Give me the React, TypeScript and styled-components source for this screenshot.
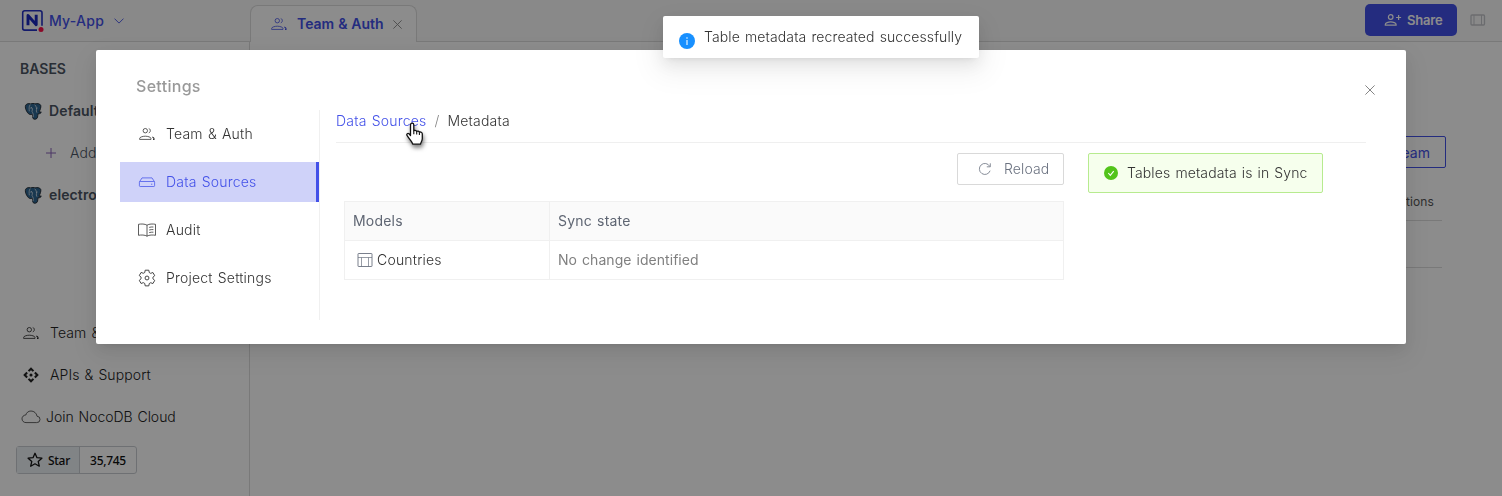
import React from "react";
import styled, { createGlobalStyle, css } from "styled-components";

const PRIMARY = "#4351e8";

const GlobalStyle = createGlobalStyle`
  *, *::before, *::after { box-sizing: border-box; }
  html, body { margin: 0; height: 100%; overflow: hidden; }
  body {
    font-family: Inter, "Liberation Sans", sans-serif;
    font-size: 14px;
    font-weight: 300;
    line-height: 22px;
    letter-spacing: 0.12px;
    word-spacing: 1px;
    color: #333;
    background: #fff;
  }
  svg { display: block; flex: none; }
`;

/* ---------- icons ---------- */

const TeamIcon = ({ w = 16 }: { w?: number }) => (
  <svg width={w} height={w} viewBox="0 0 16 16" fill="none" stroke="currentColor" strokeWidth="0.8">
    <circle cx="6.300" cy="4.700" r="2.200" />
    <path d="M.6 13.400v-.8c0-1.500 3.200-2.400 5.700-2.400s5.700.9 5.700 2.400v.8z" />
    <path d="M9.800 2.500c1.100.4 1.500 1.200 1.500 2.200s-.4 1.800-1.500 2.200" />
    <path d="M13.300 10.900c1 .4 1.700.9 1.700 1.500v1h-1" strokeWidth="1.100" />
  </svg>
);

const AddUserIcon = () => (
  <svg width="18" height="18" viewBox="0 0 18 18" fill="none" stroke="currentColor" strokeWidth="1.2">
    <circle cx="6.700" cy="6" r="2.300" />
    <path d="M1.300 14.200v-.800c0-1.500 3-2.500 5.400-2.500s5.400 1 5.400 2.500v.8zM14.600 4v5M12.100 6.500h5" />
  </svg>
);

const DriveIcon = () => (
  <svg width="18" height="18" viewBox="0 0 18 18" fill="none" stroke="currentColor" strokeWidth="0.75">
    <path d="M1.500 8.800 4 4.900h10l2.500 3.900" />
    <rect x="1.400" y="8.500" width="15.200" height="5" rx="0.8" />
    <path d="M13 11.200h1.300" />
  </svg>
);

const BookIcon = () => (
  <svg width="20" height="18" viewBox="0 0 20 18" fill="none" stroke="currentColor" strokeWidth="0.8">
    <path d="M10 4.200C8 2.800 4 2.800 1.500 3.300v11c2.500-.5 6.500-.5 8.500.9 2-1.400 6-1.400 8.500-.9v-11C16 2.800 12 2.800 10 4.200zM10 4.200v11" />
    <path d="M12.200 6.400c1.400-.4 2.800-.5 4.200-.4M12.200 9c1.400-.4 2.800-.5 4.200-.4M12.200 11.600c1.400-.4 2.800-.5 4.200-.4" />
  </svg>
);

const GearIcon = () => (
  <svg width="18" height="18" viewBox="0 0 24 24" fill="none" stroke="currentColor" strokeWidth="1.200" strokeLinejoin="round">
    <path d="M9.600 1.600h4.800l.6 3.100 1.900 1.100 3-1.100 2.400 4.200-2.400 2v2.200l2.400 2.100-2.400 4.200-3-1.100-1.900 1.100-.6 3.100H9.600L9 19.300l-1.900-1.100-3 1.100-2.400-4.200 2.400-2.100v-2.200l-2.400-2 2.400-4.200 3 1.100L9 4.700z" />
    <circle cx="12" cy="12" r="2.600" />
  </svg>
);

const TableIcon = () => (
  <svg width="16" height="16" viewBox="0 0 16 16" fill="none" stroke="#6b7280">
    <rect x="1" y="1.500" width="14" height="13" rx="0.5" strokeWidth="0.9" />
    <path d="M1 5.500h14M4.500 5.500v9M11.500 5.500v9" strokeWidth="0.7" />
  </svg>
);

const ReloadIcon = () => (
  <svg width="14" height="14" viewBox="0 0 14 14" fill="none" stroke="currentColor" strokeWidth="0.8">
    <path d="M11.700 4.300A5.500 5.500 0 1 0 12.100 8.700" />
    <path d="M12.300 1.300v3.500H8.800" />
  </svg>
);

const CrossIcon = ({ s = 10, w = 1 }: { s?: number; w?: number }) => (
  <svg width={s} height={s} viewBox="0 0 10 10" stroke="currentColor" strokeWidth={w}>
    <path d="M.4.400l9.200 9.200M9.600.4.400 9.600" />
  </svg>
);

const ChevronIcon = () => (
  <svg width="10" height="6" viewBox="0 0 10 6" fill="none" stroke="currentColor" strokeWidth="0.9">
    <path d="M.5.600 5 5.100 9.500.600" />
  </svg>
);

const ApiIcon = () => (
  <svg width="16" height="16" viewBox="0 0 24 24" fill="currentColor">
    <circle cx="12" cy="12" r="2.300" />
    <path d="m12 .3 4.800 4.800-2.200 2.200L12 4.700 9.400 7.300 7.200 5.100zM12 23.700l-4.800-4.800 2.200-2.200 2.600 2.600 2.600-2.600 2.200 2.200zM.3 12l4.800-4.800 2.200 2.200L4.700 12l2.600 2.600-2.200 2.200zM23.700 12l-4.800 4.800-2.200-2.200 2.600-2.600-2.600-2.600 2.200-2.200z" />
  </svg>
);

const CloudIcon = () => (
  <svg width="20" height="14" viewBox="0 0 20 14" fill="none" stroke="currentColor" strokeWidth="0.7">
    <path d="M5 12.600h10.600a3.200 3.200 0 0 0 .4-6.400C15.600 3.100 13 1 10 1 7.400 1 5.400 2.600 4.800 5 2.600 5.100 1 6.700 1 8.800s1.700 3.800 4 3.800z" />
  </svg>
);

const StarIcon = () => (
  <svg width="16" height="16" viewBox="0 0 16 16" fill="none" stroke="#111" strokeWidth="1.300" strokeLinejoin="round">
    <path d="m8 1.300 2 4.400 4.900.5-3.700 3.200 1.100 4.800L8 11.800l-4.300 2.400 1.100-4.800L1.100 6.200 6 5.700z" />
  </svg>
);

const PostgresIcon = () => (
  <svg width="18" height="17" viewBox="0 0 18 17">
    <path
      d="M2.600 1.200C4 .3 5.600.5 6.600.9 8 .3 10 .4 11 .9c2-.7 5-.3 5.700 1.400.6 1.800-.6 4.800-1.700 6.600.8.200 1.800.2 2.200 0 .2 1.200-1.600 2.100-3.200 1.900-.4 1.900.2 5-2.600 5.400-2.200.3-2.900-1-2.800-2.800l-.2-2.200c-1 .6-2.300.3-3 .1C3.300 10.600-.7 3.300 2.600 1.200z"
      fill="#2f6792"
      stroke="#20262c"
      strokeWidth="0.9"
    />
    <path
      d="M6.300 1.500C4.600 3.600 5.200 6 5.300 8.300M10.700 1.700c1.800 1.600 2.200 4.200 1.600 6.300l.6 1.700M6.300 5.200c1-.6 2-.4 2.200.5L8 8.500c.2 1 1.200 1.400 1.200 2.600v3M12.100 5.300l1.500-.3"
      fill="none"
      stroke="#e8eef3"
      strokeWidth="0.7"
    />
    <circle cx="7.300" cy="4.700" r=".5" fill="#fff" />
  </svg>
);

const LogoIcon = () => (
  <svg width="24" height="24" viewBox="0 0 24 24" fill="none">
    <path d="M16 20.300H3.600A1.900 1.900 0 0 1 1.700 18.400V2.900A1.900 1.900 0 0 1 3.600 1h15.500A1.900 1.900 0 0 1 21 2.900V16" transform="translate(0 .8)" stroke="#2330c4" strokeWidth="1.600" />
    <path d="M7 16.300V6.500l8.200 9.200V5.800" stroke="#1b28bd" strokeWidth="2.900" strokeLinejoin="round" />
    <circle cx="20" cy="20.600" r="2.500" fill="#fc1148" />
  </svg>
);

const PanelIcon = () => (
  <svg width="16" height="12" viewBox="0 0 16 12" fill="none" stroke="#c3c5ca">
    <rect x="1" y="1" width="13.500" height="10" rx="1" strokeWidth="1.300" />
    <path d="M4 1v10M11.500 1v10" />
  </svg>
);

const InfoIcon = () => (
  <svg width="16" height="16" viewBox="0 0 16 16">
    <circle cx="8" cy="8" r="8" fill="#1890ff" />
    <path d="M8 7v5M8 4.300v1.400" stroke="#d5eaff" strokeWidth="1.300" />
  </svg>
);

const CheckIcon = () => (
  <svg width="14" height="14" viewBox="0 0 14 14">
    <circle cx="7" cy="7" r="7" fill="#52c41a" />
    <path d="m4.300 7 2 2.300 3.400-4.200" fill="none" stroke="#fff" strokeWidth="1.100" />
  </svg>
);

const HandIcon = () => (
  <svg width="18" height="25" viewBox="0 0 18 25">
    <path
      d="M6.100 1.200c1 0 1.700.7 1.700 1.700v5.900c.3-.8 2.500-.7 2.900.7.600-.8 2.400-.5 2.700.8 1.200-.7 2.900 0 2.900 1.600v4.600c0 2.800-1.400 3.600-1.800 5.700H6.800C6.400 19.700 2.600 16.300 1 13.400c-.7-1.400.8-2.600 2-1.600l1.500 1.700V2.900c0-1 .6-1.700 1.600-1.700z"
      fill="#fff"
      stroke="#111"
      strokeWidth="1.300"
      strokeLinejoin="round"
    />
    <path d="M7.800 8.800v3.400M10.700 9.700v2.900M13.400 10.800v2.300" stroke="#111" strokeWidth="1.100" />
  </svg>
);

/* ---------- workspace behind the dialog ---------- */

const Workspace = styled.div`
  display: flex;
  flex-direction: column;
  height: 100vh;
`;

const TopBar = styled.header`
  display: flex;
  height: 42px;
  background: #fafafa;
  flex: none;
`;

const ProjectSwitch = styled.div`
  display: flex;
  align-items: center;
  width: 250px;
  padding-left: 21px;
  border-bottom: 1px solid #dcdcdc;
  color: ${PRIMARY};
`;

const ProjectName = styled.span`
  margin: 1px 10px 0 4px;
  font-weight: 500;
  letter-spacing: 0.25px;
`;

const Tab = styled.div`
  display: flex;
  align-items: center;
  width: 167px;
  margin-top: 5px;
  padding: 0 13px 0 20px;
  border: 1px solid #dcdcdc;
  border-bottom: 0;
  border-radius: 8px 8px 0 0;
  background: #fff;
  color: ${PRIMARY};
`;

const TabTitle = styled.span`
  margin: 0 9px 0 10px;
  white-space: nowrap;
  font-weight: 600;
  letter-spacing: 0;
  word-spacing: 0.4px;
`;

const Muted = styled.span`
  color: #888;
`;

const TopActions = styled.div`
  display: flex;
  flex: 1;
  align-items: center;
  justify-content: flex-end;
  gap: 13px;
  padding: 0 16px 2px 0;
  border-bottom: 1px solid #dcdcdc;
`;

const ShareButton = styled.button`
  display: flex;
  align-items: center;
  gap: 5px;
  width: 92px;
  height: 32px;
  padding: 0 0 0 19px;
  border: 0;
  border-radius: 5px;
  background: ${PRIMARY};
  color: #fff;
  font: 600 13px Inter, sans-serif;
  letter-spacing: -0.2px;
`;

const Body = styled.div`
  display: flex;
  flex: 1;
  min-height: 0;
`;

const Sidebar = styled.aside`
  display: flex;
  flex-direction: column;
  width: 250px;
  border-right: 1px solid #dcdcdc;
`;

const SidebarTitle = styled.div`
  padding: 16px 0 0 20px;
  font-weight: 600;
  letter-spacing: 0;
  color: #4b5563;
`;

const BaseRow = styled.div<{ $nested?: boolean }>`
  display: flex;
  align-items: center;
  gap: ${(p) => (p.$nested ? 14 : 7)}px;
  height: 42px;
  padding-left: ${(p) => (p.$nested ? 46 : 24)}px;
  font-weight: ${(p) => (p.$nested ? 300 : 600)};
  color: #4b5563;
`;

const BaseList = styled.div`
  flex: 1;
  padding-top: 10px;
`;

const FooterLink = styled.div<{ $gap?: number; $inset?: number }>`
  display: flex;
  align-items: center;
  gap: ${(p) => p.$gap ?? 11}px;
  height: 42px;
  padding-left: ${(p) => p.$inset ?? 23}px;
  letter-spacing: ${(p) => (p.$gap ? -0.03 : 0.1)}px;
  color: #222;
`;

const StarBadge = styled.div`
  display: flex;
  width: 121px;
  height: 28px;
  margin: 8px 0 22px 16px;
  border: 1px solid #c9cdd2;
  border-radius: 3px;
  font: 500 12px/27px "Noto Sans", sans-serif;
  letter-spacing: -0.3px;
  color: #111;
`;

const StarLabel = styled.div`
  display: flex;
  align-items: center;
  gap: 5px;
  width: 63px;
  padding-left: 10px;
  border-right: 1px solid #c9cdd2;
  background: #ebf0f4;
`;

const StarCount = styled.div`
  flex: 1;
  text-align: center;
`;

const Main = styled.main`
  display: flex;
  flex: 1;
  flex-direction: column;
  align-items: flex-end;
  padding: 94px 56px 0 0;
`;

const InviteButton = styled.button`
  height: 32px;
  padding: 0 15px;
  border: 1px solid ${PRIMARY};
  border-radius: 2px;
  background: #fff;
  color: ${PRIMARY};
  font: 400 14px Inter, sans-serif;
`;

const UserRow = styled.div<{ $height: number }>`
  width: 1100px;
  height: ${(p) => p.$height}px;
  margin-right: 4px;
  padding: 23px 8px 0 0;
  border-bottom: 1px solid #dcdcdc;
  text-align: right;
  font-size: 12px;
  font-weight: 400;
  color: #555;
`;

/* ---------- dialog ---------- */

const Mask = styled.div`
  position: fixed;
  inset: 0;
  background: rgba(0, 0, 0, 0.45);
`;

const Dialog = styled.section`
  position: fixed;
  top: 50px;
  left: 96px;
  display: flex;
  flex-direction: column;
  width: 1310px;
  height: 294px;
  padding: 24px 40px 24px 24px;
  border-radius: 2px;
  background: #fff;
  box-shadow: 0 3px 6px -4px rgba(0, 0, 0, 0.12), 0 6px 16px rgba(0, 0, 0, 0.08),
    0 9px 28px 8px rgba(0, 0, 0, 0.05);
`;

const DialogHead = styled.div`
  display: flex;
  justify-content: space-between;
  height: 36px;
  padding: 1px 0 0 16px;
  font-size: 16px;
  font-weight: 500;
  letter-spacing: 0.3px;
  color: #999;
`;

const CloseButton = styled.span`
  margin: 10px -9px 0 0;
  color: #777;
`;

const DialogBody = styled.div`
  display: flex;
  flex: 1;
  gap: 16px;
`;

const Menu = styled.nav`
  display: flex;
  flex-direction: column;
  gap: 8px;
  width: 200px;
  padding-top: 4px;
  border-right: 1px solid #f0f0f0;
`;

const MenuItem = styled.div<{ $active?: boolean }>`
  display: flex;
  align-items: center;
  height: 40px;
  padding-left: 17px;
  letter-spacing: 0.2px;
  color: #333;
  ${(p) =>
    p.$active &&
    css`
      background: #cfd2f9;
      border-right: 3px solid ${PRIMARY};
      color: ${PRIMARY};
    `}
`;

const MenuIcon = styled.span`
  display: flex;
  justify-content: center;
  width: 20px;
  margin-right: 9px;
`;

const Content = styled.div`
  flex: 1;
`;

const Breadcrumb = styled.div`
  display: flex;
  gap: 8px;
  height: 33px;
  border-bottom: 1px solid #efefef;
`;

const Crumb = styled.span<{ $link?: boolean }>`
  letter-spacing: 0.2px;
  color: ${(p) => (p.$link ? PRIMARY : "#333")};
`;

const Columns = styled.div`
  display: flex;
  align-items: flex-start;
  gap: 24px;
  padding: 10px 0 0 8px;
`;

const Sheet = styled.div`
  display: flex;
  flex-direction: column;
  align-items: flex-end;
  gap: 16px;
  width: 720px;
`;

const ReloadButton = styled.div`
  display: flex;
  align-items: center;
  gap: 12px;
  width: 107px;
  height: 32px;
  padding-left: 20px;
  border: 1px solid #d9d9d9;
  border-radius: 2px;
  color: #6b7280;
`;

const Table = styled.div`
  width: 720px;
  border: 1px solid #f0f0f0;
`;

const TableRow = styled.div<{ $head?: boolean }>`
  display: grid;
  grid-template-columns: 205px 1fr;
  height: ${(p) => (p.$head ? 39 : 38)}px;
  ${(p) =>
    p.$head &&
    css`
      border-bottom: 1px solid #f0f0f0;
      background: #fafafa;
      color: #5f6673;
      font-weight: 400;
      letter-spacing: 0.2px;
    `}
`;

const Cell = styled.div<{ $divided?: boolean; $inset?: number; $soft?: boolean }>`
  display: flex;
  align-items: center;
  gap: 4px;
  padding-left: ${(p) => p.$inset ?? 8}px;
  border-right: ${(p) => (p.$divided ? "1px solid #f0f0f0" : "0")};
  ${(p) => p.$inset && "letter-spacing: 0.2px;"}
  ${(p) => p.$soft && "color: #808080; font-weight: 400; letter-spacing: 0.05px;"}
`;

const SyncAlert = styled.div`
  display: flex;
  align-items: center;
  gap: 9px;
  width: 235px;
  height: 40px;
  padding-left: 15px;
  border: 1px solid #b7eb8f;
  border-radius: 2px;
  background: #f6ffed;
  white-space: nowrap;
`;

const Toast = styled.div`
  position: fixed;
  top: 16px;
  left: 663px;
  display: flex;
  gap: 9px;
  width: 316px;
  height: 42px;
  padding: 10px 16px;
  border-radius: 2px;
  background: #fff;
  white-space: nowrap;
  box-shadow: 0 3px 6px -4px rgba(0, 0, 0, 0.12), 0 6px 16px rgba(0, 0, 0, 0.08),
    0 9px 28px 8px rgba(0, 0, 0, 0.05);
`;

const ToastIcon = styled.span`
  padding-top: 7px;
`;

const Pointer = styled.div`
  position: fixed;
  top: 122px;
  left: 406px;
  filter: drop-shadow(1px 3px 2px rgba(0, 0, 0, 0.5));
`;

export default function App() {
  return (
    <>
      <GlobalStyle />
      <Workspace>
        <TopBar>
          <ProjectSwitch>
            <LogoIcon />
            <ProjectName>My-App</ProjectName>
            <ChevronIcon />
          </ProjectSwitch>
          <Tab>
            <TeamIcon />
            <TabTitle>Team &amp; Auth</TabTitle>
            <Muted>
              <CrossIcon s={9} />
            </Muted>
          </Tab>
          <TopActions>
            <ShareButton>
              <AddUserIcon />
              Share
            </ShareButton>
            <PanelIcon />
          </TopActions>
        </TopBar>
        <Body>
          <Sidebar>
            <SidebarTitle>BASES</SidebarTitle>
            <BaseList>
              <BaseRow>
                <PostgresIcon />
                Default
              </BaseRow>
              <BaseRow $nested>
                <svg width="10" height="10" viewBox="0 0 10 10" stroke="#8a63b8">
                  <path d="M5 0v10M0 5h10" />
                </svg>
                Add
              </BaseRow>
              <BaseRow>
                <PostgresIcon />
                electro
              </BaseRow>
            </BaseList>
            <FooterLink>
              <TeamIcon />
              Team &amp; Auth
            </FooterLink>
            <FooterLink>
              <ApiIcon />
              APIs &amp; Support
            </FooterLink>
            <FooterLink $gap={5} $inset={21}>
              <CloudIcon />
              Join NocoDB Cloud
            </FooterLink>
            <StarBadge>
              <StarLabel>
                <StarIcon />
                Star
              </StarLabel>
              <StarCount>35,745</StarCount>
            </StarBadge>
          </Sidebar>
          <Main>
            <InviteButton>Invite Team</InviteButton>
            <UserRow $height={53}>Actions</UserRow>
            <UserRow $height={47} />
          </Main>
        </Body>
      </Workspace>

      <Mask />

      <Dialog>
        <DialogHead>
          Settings
          <CloseButton>
            <CrossIcon s={10} w={0.9} />
          </CloseButton>
        </DialogHead>
        <DialogBody>
          <Menu>
            <MenuItem>
              <MenuIcon>
                <TeamIcon />
              </MenuIcon>
              Team &amp; Auth
            </MenuItem>
            <MenuItem $active>
              <MenuIcon>
                <DriveIcon />
              </MenuIcon>
              Data Sources
            </MenuItem>
            <MenuItem>
              <MenuIcon>
                <BookIcon />
              </MenuIcon>
              Audit
            </MenuItem>
            <MenuItem>
              <MenuIcon>
                <GearIcon />
              </MenuIcon>
              Project Settings
            </MenuItem>
          </Menu>
          <Content>
            <Breadcrumb>
              <Crumb $link>Data Sources</Crumb>
              <Muted>/</Muted>
              <Crumb>Metadata</Crumb>
            </Breadcrumb>
            <Columns>
              <Sheet>
                <ReloadButton>
                  <ReloadIcon />
                  Reload
                </ReloadButton>
                <Table>
                  <TableRow $head>
                    <Cell $divided>Models</Cell>
                    <Cell>Sync state</Cell>
                  </TableRow>
                  <TableRow>
                    <Cell $divided $inset={12}>
                      <TableIcon />
                      Countries
                    </Cell>
                    <Cell $soft>No change identified</Cell>
                  </TableRow>
                </Table>
              </Sheet>
              <SyncAlert>
                <CheckIcon />
                Tables metadata is in Sync
              </SyncAlert>
            </Columns>
          </Content>
        </DialogBody>
      </Dialog>

      <Toast>
        <ToastIcon>
          <InfoIcon />
        </ToastIcon>
        Table metadata recreated successfully
      </Toast>

      <Pointer>
        <HandIcon />
      </Pointer>
    </>
  );
}
